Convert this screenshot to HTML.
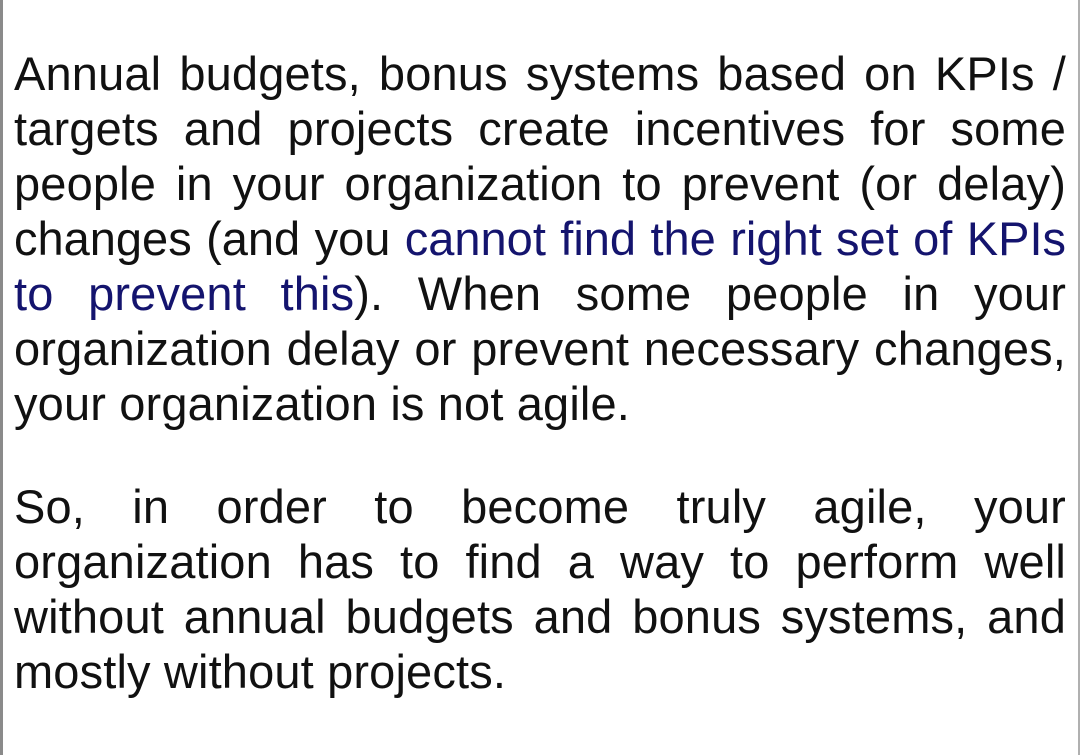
<!DOCTYPE html>
<html><head><meta charset="utf-8"><style>
html,body{margin:0;padding:0;background:#fff;}
body{width:1080px;height:755px;overflow:hidden;position:relative;}
.bl{position:absolute;left:0;top:0;width:3px;height:755px;background:#8a8a8a;}
.br{position:absolute;right:0;top:0;width:2px;height:755px;background:#b0b0b0;}
.t{position:absolute;left:14px;width:1052px;font-family:"Liberation Sans",Arial,sans-serif;font-size:47px;letter-spacing:0.15px;line-height:55px;color:#111;}
.l{white-space:nowrap;text-align:justify;text-align-last:justify;height:55px;}
.l.e{text-align-last:left;}
a{color:#14146e;text-decoration:none;}
</style></head><body>
<div class="bl"></div><div class="br"></div>
<div class="t" style="top:46px">
<div class="l">Annual budgets, bonus systems based on KPIs /</div>
<div class="l">targets and projects create incentives for some</div>
<div class="l">people in your organization to prevent (or delay)</div>
<div class="l" style="letter-spacing:0">changes (and you <a>cannot find the right set of KPIs</a></div>
<div class="l"><a>to prevent this</a>). When some people in your</div>
<div class="l">organization delay or prevent necessary changes,</div>
<div class="l e">your organization is not agile.</div>
</div>
<div class="t" style="top:479px">
<div class="l">So, in order to become truly agile, your</div>
<div class="l">organization has to find a way to perform well</div>
<div class="l">without annual budgets and bonus systems, and</div>
<div class="l e">mostly without projects.</div>
</div>
</body></html>
